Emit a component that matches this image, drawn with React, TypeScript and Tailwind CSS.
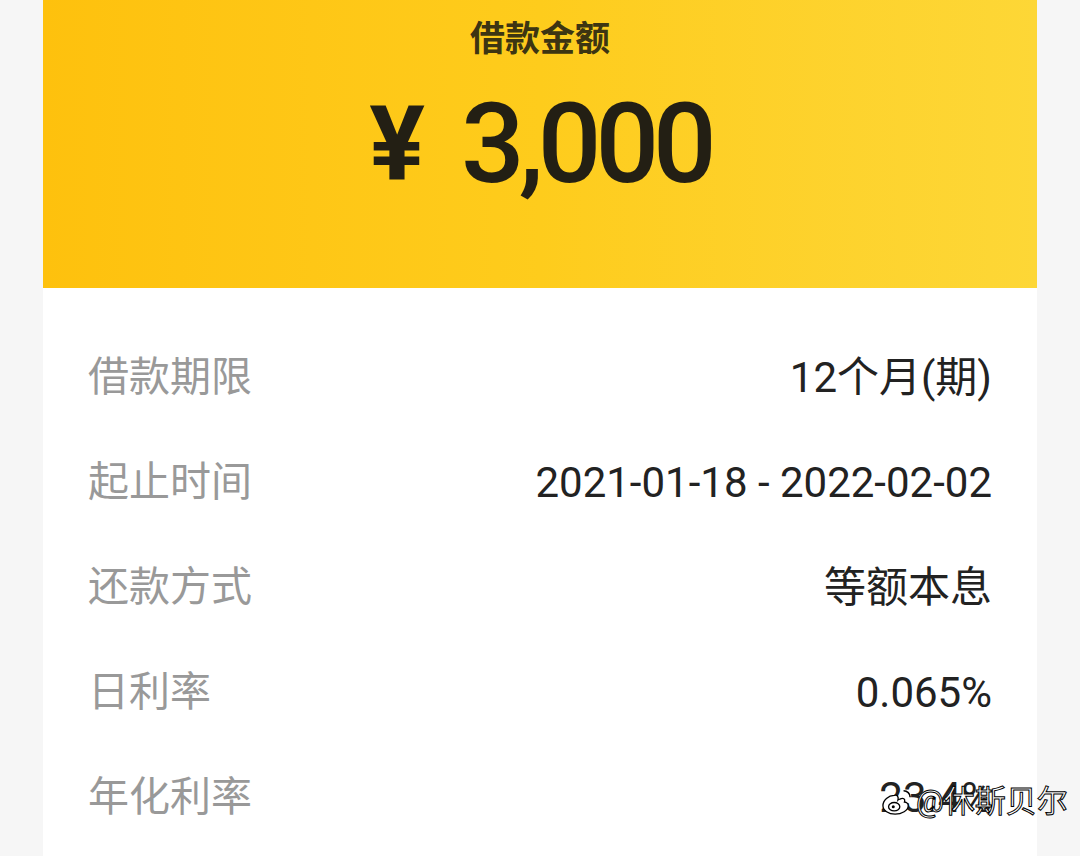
import React from "react";

const rows: [string, string][] = [
  ["借款期限", "12个月(期)"],
  ["起止时间", "2021-01-18 - 2022-02-02"],
  ["还款方式", "等额本息"],
  ["日利率", "0.065%"],
  ["年化利率", "23.4%"],
];

function Weibo() {
  return (
    <svg width="34" height="30" viewBox="0 0 36 32" fill="none">
      <path
        d="M15 9c-6 0-12 5-12 11 0 5 6 9 13 9s14-4 14-9c0-3-3-4-4-4 1-3-1-5-5-3-1 0-2 1-2 1 1-4-1-6-4-5z"
        fill="#fff"
        stroke="#000"
        strokeWidth="1.4"
      />
      <ellipse cx="15" cy="21" rx="6" ry="4.5" fill="#fff" stroke="#000" strokeWidth="1.4" />
      <circle cx="14" cy="21" r="1.6" fill="#000" />
      <path d="M25 4c4 0 7 3 7 7" stroke="#000" strokeWidth="1.6" fill="none" />
    </svg>
  );
}

export default function App() {
  return (
    <div
      className="w-[1080px] h-[856px] bg-[#f6f6f6] overflow-hidden relative"
      style={{ fontFamily: "Roboto, 'Noto Sans CJK SC', sans-serif" }}
    >
      <div className="mx-[43px] h-full bg-white">
        <div className="h-[288px] bg-gradient-to-r from-[#fec10d] via-[#fecc1c] to-[#fdd736] flex flex-col items-center">
          <div className="mt-[18px] text-[35px] leading-[44px] font-bold text-[#3d3512]">借款金额</div>
          <div className="mt-[26px] flex items-center text-[#231f14] font-medium leading-none">
            <span className="text-[104px] font-bold mr-[36px]">¥</span>
            <span className="text-[112px] tracking-[-6px]">3,000</span>
          </div>
        </div>
        <div className="pt-[37px] px-[45px]">
          {rows.map(([k, v]) => (
            <div key={k} className="h-[105px] flex items-center justify-between">
              <span className="text-[41px] text-[#999999]">{k}</span>
              <span className="text-[42px] text-[#222222]">{v}</span>
            </div>
          ))}
        </div>
      </div>
      <div className="absolute left-[880px] top-[786px] flex items-center gap-[2px] whitespace-nowrap">
        <Weibo />
        <span
          className="text-[31px] text-white leading-none"
          style={{ WebkitTextStroke: "1px #000" }}
        >
          @休斯贝尔
        </span>
      </div>
    </div>
  );
}
